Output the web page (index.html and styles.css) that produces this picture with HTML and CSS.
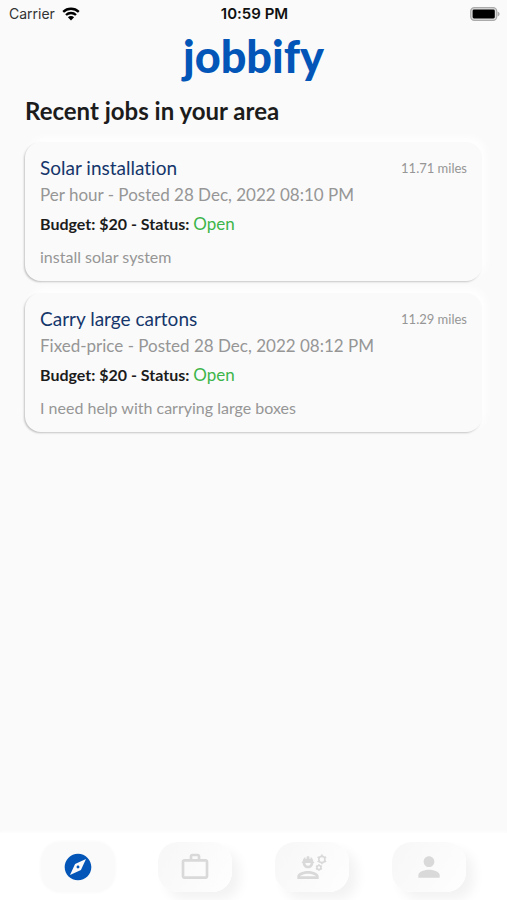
FILE: index.html
```html
<!DOCTYPE html>
<html lang="en">
<head>
<meta charset="utf-8">
<meta name="viewport" content="width=device-width, initial-scale=1">
<title>jobbify</title>
<link rel="stylesheet" href="styles.css">
</head>
<body>
<div class="status-bar">
  <span class="carrier">Carrier
    <svg class="wifi" viewBox="0 0 18 14" aria-hidden="true">
      <path d="M1.2 4.9a11.2 11.2 0 0 1 15.6 0" />
      <path d="M4 8a7.2 7.2 0 0 1 10 0" />
      <path class="solid" d="M5.9 10.3a4.4 4.4 0 0 1 6.2 0L9 13.6z" />
    </svg>
  </span>
  <time class="clock">10:59 PM</time>
  <svg class="battery" viewBox="0 0 30 14" aria-hidden="true">
    <rect class="shell" x="0.7" y="0.7" width="26" height="12.6" rx="3.6" />
    <rect x="2.6" y="2.6" width="22.2" height="8.8" rx="1.4" />
    <path class="tip" d="M27.6 4.6c2.6.8 2.6 4 0 4.8z" />
  </svg>
</div>

<header class="brand">jobbify</header>

<main class="content">
  <h1 class="heading">Recent jobs in your area</h1>
  <article class="card">
    <div class="card-top">
      <h2 class="title">Solar installation</h2>
      <span class="distance">11.71 miles</span>
    </div>
    <p class="posted">Per hour - Posted 28 Dec, 2022 08:10 PM</p>
    <p class="budget">Budget: $20 - Status: <span class="open">Open</span></p>
    <p class="description">install solar system</p>
  </article>
  <article class="card">
    <div class="card-top">
      <h2 class="title">Carry large cartons</h2>
      <span class="distance">11.29 miles</span>
    </div>
    <p class="posted">Fixed-price - Posted 28 Dec, 2022 08:12 PM</p>
    <p class="budget">Budget: $20 - Status: <span class="open">Open</span></p>
    <p class="description">I need help with carrying large boxes</p>
  </article>
</main>

<nav class="tabs">
  <button class="tab active" type="button" aria-label="Explore">
    <svg viewBox="0 0 24 24"><path d="M12 10.9c-.61 0-1.1.49-1.1 1.1s.49 1.1 1.1 1.1c.61 0 1.1-.49 1.1-1.1s-.49-1.1-1.1-1.1zM12 2C6.48 2 2 6.48 2 12s4.48 10 10 10 10-4.48 10-10S17.52 2 12 2zm2.19 12.19L6 18l3.81-8.19L18 6l-3.81 8.19z"/></svg>
  </button>
  <button class="tab" type="button" aria-label="Jobs">
    <svg viewBox="0 0 24 24"><path fill-rule="evenodd" d="M14 6V4h-4v2h4zM4 8v11h16V8H4zm16-2c1.11 0 2 .89 2 2v11c0 1.11-.89 2-2 2H4c-1.11 0-2-.89-2-2V8c0-1.11.89-2 2-2h4V4c0-1.11.89-2 2-2h4c1.11 0 2 .89 2 2v2h4z"/></svg>
  </button>
  <button class="tab" type="button" aria-label="Workers">
    <svg viewBox="0 0 24 24">
      <path fill-rule="evenodd" d="M9 15c-2.67 0-8 1.34-8 4v2h16v-2c0-2.66-5.33-4-8-4zm6 4H3c.22-.72 3.31-2 6-2 2.7 0 5.8 1.29 6 2z"/>
      <path fill-rule="evenodd" d="M4.74 9H5c0 2.21 1.79 4 4 4s4-1.79 4-4h.26c.27 0 .49-.22.49-.49v-.02c0-.27-.22-.49-.49-.49H13c0-1.48-.81-2.75-2-3.45v.95c0 .28-.22.5-.5.5s-.5-.22-.5-.5V4.14C9.68 4.06 9.35 4 9 4s-.68.06-1 .14V5.5c0 .28-.22.5-.5.5S7 5.78 7 5.5v-.95C5.81 5.25 5 6.52 5 8h-.26c-.27 0-.49.22-.49.49v.03c0 .26.22.48.49.48zM11 9c0 1.1-.9 2-2 2s-2-.9-2-2h4z"/>
      <circle class="gear" cx="19.4" cy="6.3" r="2.3"/>
      <path class="teeth" d="M19.4 2.6v1.6M19.4 8.4V10M16.2 4.45l1.4.8M21.2 7.35l1.4.8M16.2 8.15l1.4-.8M21.2 5.25l1.4-.8"/>
      <circle class="gear" cx="17.2" cy="12.4" r="1.5"/>
      <path class="teeth" d="M17.2 9.9v1M17.2 13.9v1M15 11.15l.9.5M18.5 13.15l.9.5M15 13.65l.9-.5M18.5 11.65l.9-.5"/>
    </svg>
  </button>
  <button class="tab" type="button" aria-label="Profile">
    <svg viewBox="0 0 24 24"><path d="M12 12c2.21 0 4-1.79 4-4s-1.79-4-4-4-4 1.79-4 4 1.79 4 4 4zm0 2c-2.67 0-8 1.34-8 4v2h16v-2c0-2.66-5.33-4-8-4z"/></svg>
  </button>
</nav>
</body>
</html>
```
FILE: styles.css
```css
* {
  box-sizing: border-box;
}

body {
  margin: 0;
  min-height: 100vh;
  display: flex;
  flex-direction: column;
  background: #fafafa;
  color: #1c1c1c;
  font-family: Lato, "Liberation Sans", sans-serif;
  font-variant-ligatures: none;
}

h1, h2, p {
  margin: 0;
}

.status-bar {
  display: grid;
  grid-template-columns: 1fr auto 1fr;
  align-items: center;
  height: 27px;
  padding: 0 7px 0 9px;
  font-family: Inter, "Liberation Sans", sans-serif;
  font-size: 14px;
  color: #111;
}

.carrier {
  display: flex;
  align-items: center;
  gap: 7px;
  color: #333;
}

.wifi {
  width: 18px;
  height: 14px;
  fill: none;
  stroke: #000;
  stroke-width: 2.3;
}

.wifi .solid {
  fill: #000;
  stroke: none;
}

.clock {
  font-size: 15px;
  font-weight: 600;
}

.battery {
  justify-self: end;
  width: 30px;
  height: 14px;
}

.battery .shell {
  fill: #ddd;
  stroke: #aaa;
  stroke-width: 1.2;
}

.battery .tip {
  fill: #aaa;
}

.brand {
  height: 65px;
  line-height: 58px;
  text-align: center;
  font-size: 45px;
  font-weight: 900;
  color: #0356b8;
}

.content {
  flex: 1;
  padding: 0 25px;
}

.heading {
  margin-bottom: 13px;
  font-size: 24px;
  line-height: 37px;
  font-weight: 700;
}

.card {
  padding: 13px 15px 10px;
  margin-bottom: 12px;
  border-radius: 16px;
  background: #fafafa;
  box-shadow: 4px -4px 8px #fff, -1px 1px 2px #bbb;
}

.card-top {
  display: flex;
  justify-content: space-between;
  align-items: center;
  line-height: 26px;
}

.title {
  font-size: 19px;
  font-weight: 400;
  color: #15366b;
}

.distance {
  font-size: 13px;
  color: #969696;
}

.posted {
  font-size: 17px;
  line-height: 28px;
  color: #969696;
}

.budget {
  font-size: 16px;
  line-height: 30px;
  font-weight: 700;
}

.open {
  font-size: 17px;
  font-weight: 400;
  color: #3db54a;
}

.description {
  margin-top: 4px;
  font-size: 16px;
  line-height: 28px;
  color: #969696;
}

.tabs {
  display: grid;
  grid-template-columns: repeat(4, 1fr);
  align-items: center;
  justify-items: center;
  height: 67px;
  padding: 0 20px;
  background: #fff;
  box-shadow: 0 -1px 4px #fff;
  overflow: hidden;
}

.tab {
  display: flex;
  align-items: center;
  justify-content: center;
  width: 74px;
  height: 50px;
  padding: 0;
  border: 0;
  border-radius: 20px;
  background: linear-gradient(120deg, #f7f7f7, #fefefe);
  box-shadow: 8px 8px 12px #f3f3f3;
  color: #d9d9d9;
}

.tab.active {
  background: #fafafa;
  box-shadow: 0 0 3px 1px #fafafa;
  color: #0356b8;
}

.tab svg {
  width: 32px;
  height: 32px;
  fill: currentColor;
}

.tab .gear {
  fill: none;
  stroke: currentColor;
  stroke-width: 1.2;
}

.tab .teeth {
  fill: none;
  stroke: currentColor;
  stroke-width: 1.2;
}
```
